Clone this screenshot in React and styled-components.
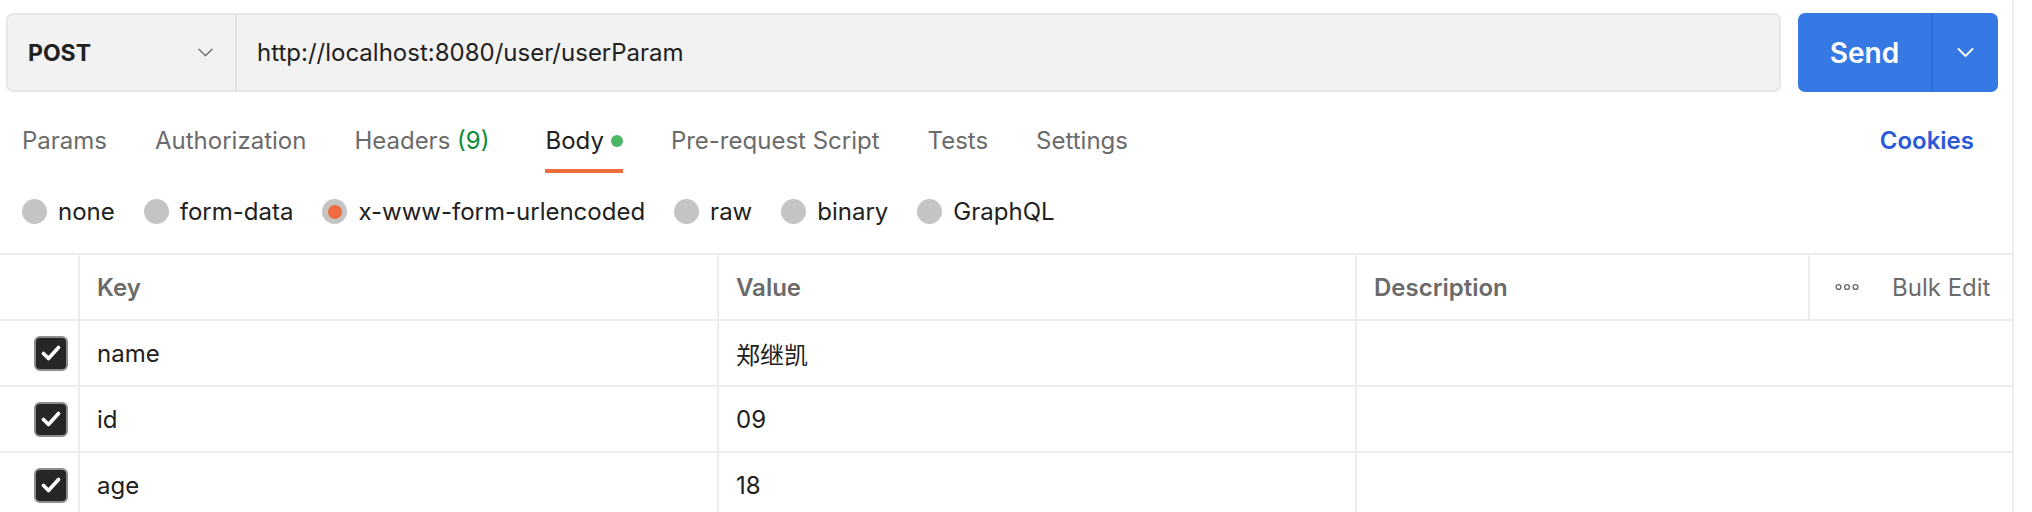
import React from "react";
import styled, { createGlobalStyle } from "styled-components";

const GlobalStyle = createGlobalStyle`
  html, body { margin: 0; padding: 0; background: #ffffff; }
  body { font-family: Inter, "Noto Sans", "Noto Sans CJK SC", sans-serif; color: #212121; }
  * { box-sizing: border-box; }
`;

const Page = styled.div`
  width: 2014px;
  height: 512px;
  border-right: 2px solid #ececec;
  overflow: hidden;
`;

const TopBar = styled.div`
  display: flex;
  gap: 17px;
  padding: 13px 14px 0 6px;
`;

const UrlBox = styled.div`
  flex: 1;
  height: 79px;
  display: flex;
  background: #f2f2f2;
  border: 2px solid #e6e6e6;
  border-radius: 7px;
`;

const MethodSelect = styled.div`
  width: 229px;
  display: flex;
  align-items: center;
  justify-content: space-between;
  padding: 0 22px 0 20px;
  border-right: 2px solid #e3e3e3;
  font-size: 23px;
  font-weight: 700;
  color: #212121;
`;

const UrlText = styled.div`
  display: flex;
  align-items: center;
  padding-left: 20px;
  font-size: 24px;
  color: #212121;
`;

const SendGroup = styled.div`
  width: 200px;
  height: 79px;
  display: flex;
  background: #3679e4;
  border-radius: 7px;
  overflow: hidden;
`;

const SendLabel = styled.div`
  width: 135px;
  display: flex;
  align-items: center;
  justify-content: center;
  color: #ffffff;
  font-size: 28px;
  font-weight: 600;
  border-right: 2px solid #2f6cd4;
`;

const SendArrow = styled.div`
  flex: 1;
  display: flex;
  align-items: center;
  justify-content: center;
`;

const TabsBar = styled.div`
  display: flex;
  align-items: flex-start;
  padding: 34px 38px 0 22px;
`;

const Tab = styled.div`
  display: flex;
  align-items: center;
  gap: 7px;
  font-size: 24px;
  line-height: 29px;
  padding-bottom: 14px;
  border-bottom: 4px solid ${(p) => (p.$active ? "#ed6b3c" : "transparent")};
  color: ${(p) => (p.$active ? "#212121" : "#6b6b6b")};
  margin-right: ${(p) => p.$mr}px;
  white-space: nowrap;
`;

const Count = styled.span`
  color: #0a8a3c;
`;

const Dot = styled.span`
  width: 12px;
  height: 12px;
  border-radius: 50%;
  background: #4cb763;
`;

const CookiesLink = styled.div`
  margin-left: auto;
  font-size: 24px;
  line-height: 29px;
  font-weight: 600;
  color: #2a5ad7;
`;

const RadioRow = styled.div`
  display: flex;
  align-items: center;
  gap: 29px;
  padding: 24px 0 27px 22px;
`;

const RadioItem = styled.label`
  display: flex;
  align-items: center;
  gap: 11px;
  font-size: 24px;
  line-height: 29px;
  color: #212121;
`;

const RadioCircle = styled.span`
  width: 25px;
  height: 25px;
  border-radius: 50%;
  background: #c4c4c4;
  display: flex;
  align-items: center;
  justify-content: center;
  &::after {
    content: "";
    width: 14px;
    height: 14px;
    border-radius: 50%;
    background: ${(p) => (p.$checked ? "#ee6c3f" : "transparent")};
  }
`;

const Table = styled.div`
  border-top: 2px solid #ececec;
`;

const Row = styled.div`
  display: grid;
  grid-template-columns: ${(p) => (p.$header ? "78px 639px 638px 453px 1fr" : "78px 639px 638px 1fr")};
  height: 66px;
  border-bottom: 2px solid #ececec;
`;

const Cell = styled.div`
  display: flex;
  align-items: center;
  padding-left: ${(p) => (p.$first ? 34 : 17)}px;
  border-left: ${(p) => (p.$first ? "none" : "2px solid #ececec")};
  font-size: 24px;
  color: #212121;
  white-space: nowrap;
`;

const HeadCell = styled(Cell)`
  font-weight: 600;
  color: #6b6b6b;
`;

const ActionsCell = styled(Cell)`
  gap: 33px;
  padding-left: 25px;
  font-weight: 400;
  color: #6b6b6b;
`;

const CheckBox = styled.span`
  width: 34px;
  height: 35px;
  border-radius: 6px;
  background: #262626;
  border: 2px solid #8c8c8c;
  display: flex;
  align-items: center;
  justify-content: center;
`;

const Chevron = ({ color, width = 16, height = 9, sw = 1.6 }) => (
  <svg width={width} height={height} viewBox="0 0 16 9" fill="none">
    <path d="M1 1l7 7 7-7" stroke={color} strokeWidth={sw} strokeLinecap="round" strokeLinejoin="round" />
  </svg>
);

const Check = () => (
  <svg width="20" height="16" viewBox="0 0 20 16" fill="none">
    <path d="M2.5 8.5l5 5L17.5 2.5" stroke="#ffffff" strokeWidth="3.6" strokeLinecap="round" strokeLinejoin="round" />
  </svg>
);

const Dots = () => (
  <svg width="24" height="8" viewBox="0 0 24 8" fill="none">
    {[3.5, 12, 20.5].map((cx) => (
      <circle key={cx} cx={cx} cy="4" r="2.4" stroke="#6b6b6b" strokeWidth="1.4" />
    ))}
  </svg>
);

const tabs = [
  { label: "Params", mr: 48 },
  { label: "Authorization", mr: 48 },
  { label: "Headers", count: "(9)", mr: 56 },
  { label: "Body", active: true, dot: true, mr: 48 },
  { label: "Pre-request Script", mr: 48 },
  { label: "Tests", mr: 48 },
  { label: "Settings", mr: 0 },
];

const radios = ["none", "form-data", "x-www-form-urlencoded", "raw", "binary", "GraphQL"];

const rows = [
  { key: "name", value: "郑继凯" },
  { key: "id", value: "09" },
  { key: "age", value: "18" },
];

export default function App() {
  return (
    <>
      <GlobalStyle />
      <Page>
        <TopBar>
          <UrlBox>
            <MethodSelect>
              POST
              <Chevron color="#6b6b6b" width={15} height={9} sw={1.4} />
            </MethodSelect>
            <UrlText>http://localhost:8080/user/userParam</UrlText>
          </UrlBox>
          <SendGroup>
            <SendLabel>Send</SendLabel>
            <SendArrow>
              <Chevron color="#ffffff" width={17} height={9} sw={1.8} />
            </SendArrow>
          </SendGroup>
        </TopBar>

        <TabsBar>
          {tabs.map((t) => (
            <Tab key={t.label} $active={t.active} $mr={t.mr}>
              <span>
                {t.label}
                {t.count && <Count> {t.count}</Count>}
              </span>
              {t.dot && <Dot />}
            </Tab>
          ))}
          <CookiesLink>Cookies</CookiesLink>
        </TabsBar>

        <RadioRow>
          {radios.map((r) => (
            <RadioItem key={r}>
              <RadioCircle $checked={r === "x-www-form-urlencoded"} />
              {r}
            </RadioItem>
          ))}
        </RadioRow>

        <Table>
          <Row $header>
            <HeadCell $first />
            <HeadCell>Key</HeadCell>
            <HeadCell>Value</HeadCell>
            <HeadCell>Description</HeadCell>
            <ActionsCell>
              <Dots />
              Bulk Edit
            </ActionsCell>
          </Row>
          {rows.map((r) => (
            <Row key={r.key}>
              <Cell $first>
                <CheckBox>
                  <Check />
                </CheckBox>
              </Cell>
              <Cell>{r.key}</Cell>
              <Cell>{r.value}</Cell>
              <Cell />
            </Row>
          ))}
        </Table>
      </Page>
    </>
  );
}
